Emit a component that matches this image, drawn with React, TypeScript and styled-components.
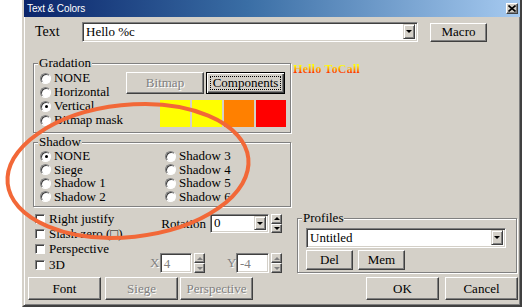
import styled, { createGlobalStyle } from 'styled-components';

const GlobalStyle = createGlobalStyle`
  html, body {
    margin: 0;
    padding: 0;
    background: #fff;
  }
  body {
    width: 522px;
    height: 307px;
    overflow: hidden;
    font-family: "Liberation Serif", "Times New Roman", serif;
  }
`;

const FACE = '#d4d0c8';

interface SizeProps {
    $w: number;
    $h?: number;
}

const App = () => {
    return (
        <Page>
            <GlobalStyle />
            <Window>
                <TitleBar>
                    <TitleText>Text &amp; Colors</TitleText>
                    <CloseButton>
                        <svg width="8" height="7" viewBox="0 0 8 7">
                            <path d="M0.5 0.5 L7.5 6.5 M7.5 0.5 L0.5 6.5" stroke="#000" strokeWidth="1.6" />
                        </svg>
                    </CloseButton>
                </TitleBar>

                <TextRow>
                    <TextLabel>Text</TextLabel>
                    <Combo $w={336} $h={20}>
                        <ComboValue>Hello %c</ComboValue>
                        <DropArrow />
                    </Combo>
                    <Button $w={57} $h={19} style={{ marginLeft: 12 }}>
                        Macro
                    </Button>
                </TextRow>

                <Main>
                    <LeftCol>
                        <GroupBox $h={77}>
                            <Legend>Gradation</Legend>
                            <GradationBody>
                                <RadioList>
                                    <Radio label="NONE" />
                                    <Radio label="Horizontal" />
                                    <Radio label="Vertical" checked />
                                    <Radio label="Bitmap mask" />
                                </RadioList>
                                <GradationSide>
                                    <ButtonRow>
                                        <Button $w={78} $h={22} disabled>
                                            Bitmap
                                        </Button>
                                        <DefaultButton $w={79} $h={22}>
                                            Components
                                        </DefaultButton>
                                    </ButtonRow>
                                    <SwatchRow>
                                        <Swatch $color="#ffff00" />
                                        <Swatch $color="#ffff00" />
                                        <Swatch $color="#ff8000" />
                                        <Swatch $color="#ff0000" />
                                    </SwatchRow>
                                </GradationSide>
                            </GradationBody>
                        </GroupBox>

                        <GroupBox $h={72} style={{ marginTop: 2 }}>
                            <Legend>Shadow</Legend>
                            <ShadowGrid>
                                <Radio label="NONE" checked />
                                <Radio label="Shadow 3" />
                                <Radio label="Siege" />
                                <Radio label="Shadow 4" />
                                <Radio label="Shadow 1" />
                                <Radio label="Shadow 5" />
                                <Radio label="Shadow 2" />
                                <Radio label="Shadow 6" />
                            </ShadowGrid>
                        </GroupBox>

                        <Options>
                            <CheckList>
                                <CheckRow>
                                    <CheckBox />
                                    Right justify
                                </CheckRow>
                                <CheckRow>
                                    <CheckBox />
                                    Slash zero (□)
                                </CheckRow>
                                <CheckRow>
                                    <CheckBox />
                                    Perspective
                                </CheckRow>
                                <CheckRow>
                                    <CheckBox />
                                    3D
                                </CheckRow>
                            </CheckList>
                            <Controls>
                                <RotationRow>
                                    <FieldLabel>Rotation</FieldLabel>
                                    <Combo $w={59} $h={19}>
                                        <ComboValue>0</ComboValue>
                                        <DropArrow />
                                    </Combo>
                                    <Spinner $h={19} />
                                </RotationRow>
                                <XYRow>
                                    <FieldLabel $disabled style={{ width: 10 }}>
                                        X
                                    </FieldLabel>
                                    <Field $w={33} $h={20} $disabled>
                                        4
                                    </Field>
                                    <Spinner $h={20} disabled />
                                    <FieldLabel $disabled style={{ width: 9, marginLeft: 22 }}>
                                        Y
                                    </FieldLabel>
                                    <Field $w={34} $h={20} $disabled>
                                        -4
                                    </Field>
                                    <Spinner $h={20} disabled />
                                </XYRow>
                            </Controls>
                        </Options>
                    </LeftCol>

                    <RightCol>
                        <Preview>Hello ToCall</Preview>
                        <ProfilesBox $h={62}>
                            <Legend>Profiles</Legend>
                            <Combo $w={200} $h={20}>
                                <ComboValue>Untitled</ComboValue>
                                <DropArrow />
                            </Combo>
                            <ProfileButtons>
                                <Button $w={47} $h={20}>
                                    Del
                                </Button>
                                <Button $w={47} $h={20}>
                                    Mem
                                </Button>
                            </ProfileButtons>
                        </ProfilesBox>
                    </RightCol>
                </Main>

                <BottomRow>
                    <Button $w={73} $h={23}>
                        Font
                    </Button>
                    <Button $w={73} $h={23} disabled style={{ marginLeft: 4 }}>
                        Siege
                    </Button>
                    <Button $w={73} $h={23} disabled style={{ marginLeft: 2 }}>
                        Perspective
                    </Button>
                    <Spacer />
                    <Button $w={73} $h={23}>
                        OK
                    </Button>
                    <Button $w={73} $h={23} style={{ marginLeft: 6 }}>
                        Cancel
                    </Button>
                </BottomRow>
            </Window>

            <Annotation width="522" height="307" viewBox="0 0 522 307">
                <ellipse
                    cx="128"
                    cy="171"
                    rx="121"
                    ry="66"
                    transform="rotate(-6 128 171)"
                    fill="none"
                    stroke="#f26838"
                    strokeWidth="4"
                />
            </Annotation>
        </Page>
    );
};

const Radio = ({ label, checked }: { label: string; checked?: boolean }) => (
    <RadioRow>
        <RadioDot $checked={checked} />
        {label}
    </RadioRow>
);

const Spinner = ({ $h, disabled }: { $h: number; disabled?: boolean }) => (
    <SpinnerBox $h={$h}>
        <SpinButton>
            <Tri $up $disabled={disabled} />
        </SpinButton>
        <SpinButton>
            <Tri $disabled={disabled} />
        </SpinButton>
    </SpinnerBox>
);

const DropArrow = () => (
    <ArrowButton>
        <Tri />
    </ArrowButton>
);

const Page = styled.div`
    position: relative;
    width: 522px;
    height: 307px;
`;

const Window = styled.div`
    margin-left: 22px;
    width: 500px;
    height: 307px;
    box-sizing: border-box;
    display: flex;
    flex-direction: column;
    background: ${FACE};
    border-style: solid;
    border-width: 0 2px 2px 2px;
    border-color: ${FACE} #404040 #404040 ${FACE};
    box-shadow: inset 1px 0 #fff, inset -1px -1px #808080;
    color: #000;
    font-size: 13px;
`;

const TitleBar = styled.div`
    height: 17px;
    display: flex;
    align-items: center;
    padding: 0 2px 0 3px;
    background: linear-gradient(90deg, #0a246a 0%, #3a6ea5 45%, #a6caf0 100%);
`;

const TitleText = styled.span`
    flex: 1;
    color: #fff;
    font-family: "Liberation Sans", Arial, sans-serif;
    font-size: 10px;
    letter-spacing: -0.1px;
`;

const CloseButton = styled.div`
    width: 12px;
    height: 11px;
    box-sizing: border-box;
    display: flex;
    align-items: center;
    justify-content: center;
    background: ${FACE};
    border: 1px solid;
    border-color: #fff #404040 #404040 #fff;
    box-shadow: inset -1px -1px #808080;
`;

const TextRow = styled.div`
    display: flex;
    align-items: center;
    margin-top: 5px;
    padding-left: 11px;
    height: 20px;
`;

const TextLabel = styled.span`
    width: 47px;
    font-size: 14px;
`;

const Combo = styled.div<SizeProps>`
    width: ${({ $w }) => $w}px;
    height: ${({ $h }) => $h}px;
    box-sizing: border-box;
    display: flex;
    align-items: stretch;
    background: #fff;
    border: 1px solid;
    border-color: #808080 #fff #fff #808080;
    box-shadow: inset 1px 1px #404040, inset -1px -1px ${FACE};
    padding: 1px 2px 2px 2px;
`;

const ComboValue = styled.span`
    flex: 1;
    display: flex;
    align-items: center;
    padding-left: 1px;
    font-size: 13px;
    white-space: nowrap;
`;

const ArrowButton = styled.div`
    width: 12px;
    box-sizing: border-box;
    display: flex;
    align-items: center;
    justify-content: center;
    background: ${FACE};
    border: 1px solid;
    border-color: ${FACE} #404040 #404040 ${FACE};
    box-shadow: inset 1px 1px #fff, inset -1px -1px #808080;
`;

const Tri = styled.span<{ $up?: boolean; $disabled?: boolean }>`
    width: 0;
    height: 0;
    border-left: 3px solid transparent;
    border-right: 3px solid transparent;
    ${({ $up, $disabled }) =>
        $up
            ? `border-bottom: 3px solid ${$disabled ? '#808080' : '#000'};`
            : `border-top: 3px solid ${$disabled ? '#808080' : '#000'};`}
`;

const Button = styled.button<SizeProps>`
    width: ${({ $w }) => $w}px;
    height: ${({ $h }) => $h}px;
    box-sizing: border-box;
    padding: 0;
    margin: 0;
    background: ${FACE};
    border: 1px solid;
    border-color: #fff #404040 #404040 #fff;
    box-shadow: inset -1px -1px #808080;
    font-family: "Liberation Serif", "Times New Roman", serif;
    font-size: 13px;
    color: #000;

    &:disabled {
        color: #808080;
        text-shadow: 1px 1px #fff;
    }
`;

const DefaultButton = styled(Button)`
    border: 1px solid #000;
    box-shadow: inset 1px 1px #fff, inset -1px -1px #404040, inset -2px -2px #808080;
    outline: 1px dotted #000;
    outline-offset: -5px;
`;

const Main = styled.div`
    display: flex;
    height: 219px;
    margin-top: 14px;
    padding-left: 9px;
`;

const LeftCol = styled.div`
    width: 258px;
    display: flex;
    flex-direction: column;
`;

const RightCol = styled.div`
    flex: 1;
    display: flex;
    flex-direction: column;
    padding: 0 3px 0 2px;
`;

const GroupBox = styled.fieldset<{ $h: number }>`
    height: ${({ $h }) => $h}px;
    box-sizing: border-box;
    margin: 0;
    min-width: 0;
    padding: 0 4px 0 6px;
    border: 1px solid #808080;
    box-shadow: 1px 1px 0 #fff, inset 1px 1px 0 #fff;
`;

const Legend = styled.legend`
    padding: 0 1px;
    margin-left: -2px;
    font-size: 13px;
    line-height: 14px;
    background: ${FACE};
`;

const GradationBody = styled.div`
    display: flex;
    justify-content: space-between;
    padding-top: 1px;
`;

const RadioList = styled.div`
    display: flex;
    flex-direction: column;
`;

const RadioRow = styled.div`
    display: flex;
    align-items: center;
    gap: 3px;
    height: 14px;
    font-size: 13px;
    white-space: nowrap;
`;

const RadioDot = styled.span<{ $checked?: boolean }>`
    width: 11px;
    height: 11px;
    box-sizing: border-box;
    border-radius: 50%;
    display: inline-flex;
    align-items: center;
    justify-content: center;
    background: #fff;
    border: 1px solid;
    border-color: #808080 #fff #fff #808080;
    box-shadow: inset 1px 1px #404040;

    &::after {
        content: '';
        display: ${({ $checked }) => ($checked ? 'block' : 'none')};
        width: 3px;
        height: 3px;
        margin: 1px 0 0 1px;
        border-radius: 50%;
        background: #000;
    }
`;

const GradationSide = styled.div`
    display: flex;
    flex-direction: column;
    align-items: flex-end;
    padding-top: 1px;
`;

const ButtonRow = styled.div`
    display: flex;
    gap: 2px;
    margin-right: 1px;
`;

const SwatchRow = styled.div`
    display: flex;
    gap: 2px;
    margin-top: 6px;
`;

const Swatch = styled.div<{ $color: string }>`
    width: 30px;
    height: 27px;
    background: ${({ $color }) => $color};
`;

const ShadowGrid = styled.div`
    display: grid;
    grid-template-columns: 125px 1fr;
    grid-auto-rows: 13.5px;
`;

const Options = styled.div`
    display: flex;
    margin-top: 3px;
    padding-left: 2px;
    flex: 1;
`;

const CheckList = styled.div`
    width: 115px;
    display: flex;
    flex-direction: column;
    padding-top: 1px;
`;

const CheckRow = styled.div`
    display: flex;
    align-items: center;
    gap: 4px;
    height: 15.3px;
    white-space: nowrap;
`;

const CheckBox = styled.span`
    width: 10px;
    height: 10px;
    box-sizing: border-box;
    background: #fff;
    border: 1px solid;
    border-color: #808080 #fff #fff #808080;
    box-shadow: inset 1px 1px #404040;
`;

const Controls = styled.div`
    display: flex;
    flex-direction: column;
    width: 132px;
`;

const RotationRow = styled.div`
    display: flex;
    align-items: center;
    justify-content: flex-end;
    margin-top: 4px;
`;

const FieldLabel = styled.span<{ $disabled?: boolean }>`
    margin-right: 4px;
    color: ${({ $disabled }) => ($disabled ? '#808080' : '#000')};
    text-shadow: ${({ $disabled }) => ($disabled ? '1px 1px #fff' : 'none')};
`;

const XYRow = styled.div`
    display: flex;
    align-items: center;
    margin-top: 20px;

    ${FieldLabel} {
        margin-right: 0;
    }
`;

const Field = styled.div<SizeProps & { $disabled?: boolean }>`
    width: ${({ $w }) => $w}px;
    height: ${({ $h }) => $h}px;
    box-sizing: border-box;
    padding: 2px 3px;
    line-height: 15px;
    background: #fff;
    border: 1px solid;
    border-color: #808080 #fff #fff #808080;
    box-shadow: inset 1px 1px #404040, inset -1px -1px ${FACE};
    color: ${({ $disabled }) => ($disabled ? '#808080' : '#000')};
`;

const SpinnerBox = styled.div<{ $h: number }>`
    width: 11px;
    height: ${({ $h }) => $h}px;
    margin-left: 2px;
    display: flex;
    flex-direction: column;
`;

const SpinButton = styled.div`
    flex: 1;
    box-sizing: border-box;
    display: flex;
    align-items: center;
    justify-content: center;
    background: ${FACE};
    border: 1px solid;
    border-color: #fff #404040 #404040 #fff;
    box-shadow: inset -1px -1px #808080;
`;

const Preview = styled.div`
    margin-top: 6px;
    font-size: 12px;
    font-weight: bold;
    line-height: 14px;
    letter-spacing: 0.2px;
    background: linear-gradient(180deg, #ffff00 25%, #ff8000 60%, #ff0000 85%);
    -webkit-background-clip: text;
    background-clip: text;
    color: transparent;
    align-self: flex-start;
`;

const ProfilesBox = styled(GroupBox)`
    margin-top: auto;
    margin-left: 4px;
    margin-bottom: 2px;
    padding: 3px 8px 0 8px;

    ${Legend} {
        margin-left: -4px;
    }
`;

const ProfileButtons = styled.div`
    display: flex;
    gap: 5px;
    margin-top: 2px;
`;

const BottomRow = styled.div`
    display: flex;
    margin-top: 2px;
    padding: 0 2px 0 4px;
`;

const Spacer = styled.div`
    flex: 1;
`;

const Annotation = styled.svg`
    position: absolute;
    left: 0;
    top: 0;
    pointer-events: none;
`;

export default App;
